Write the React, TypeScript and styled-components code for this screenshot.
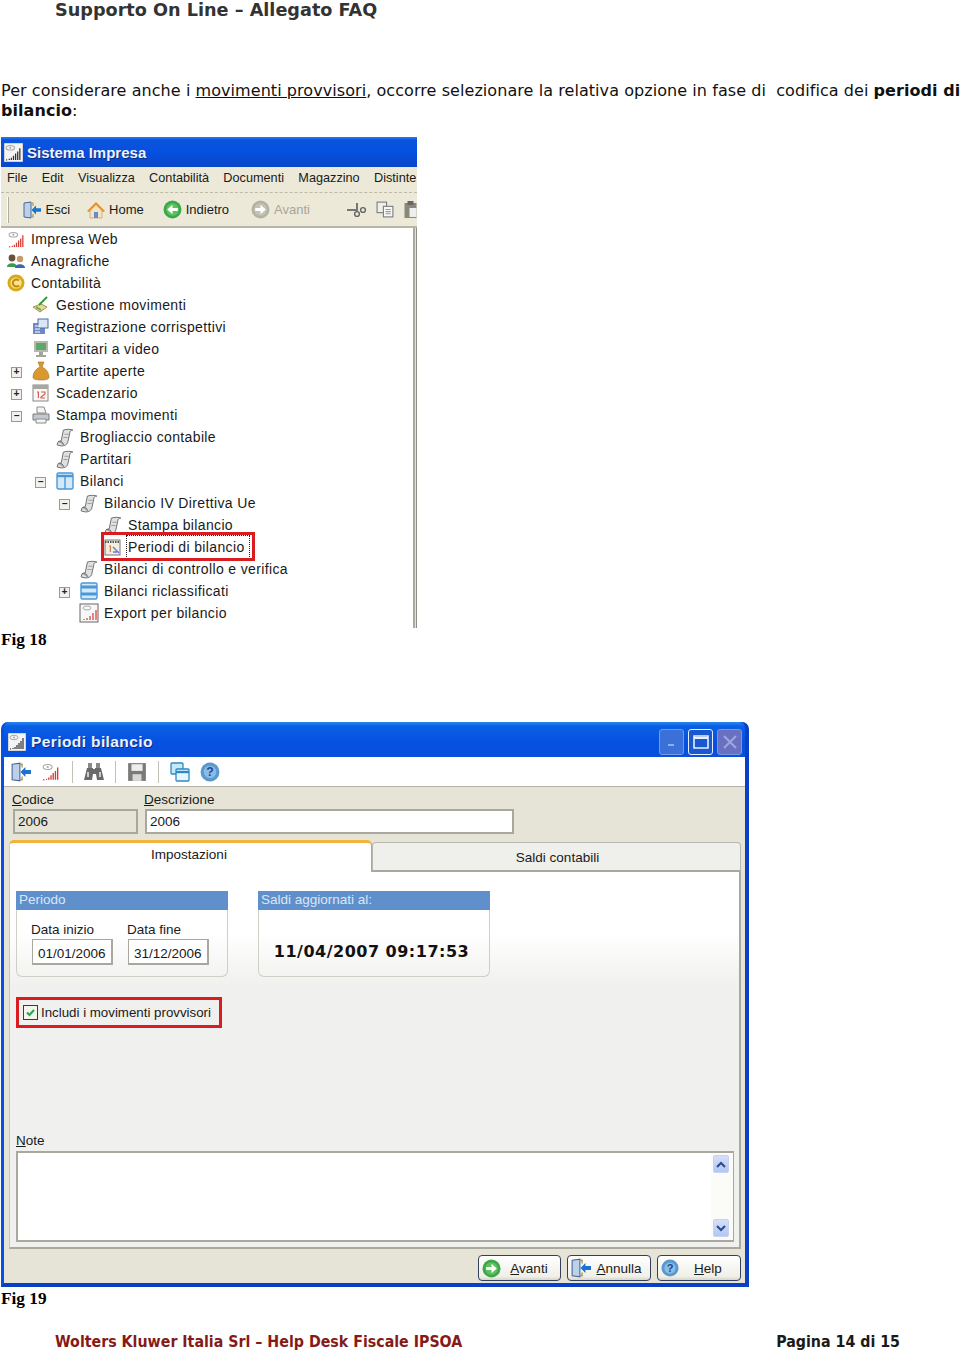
import { ReactNode } from 'react'
import styled, { createGlobalStyle } from 'styled-components'

const GlobalStyle = createGlobalStyle`
  html, body {
    margin: 0;
    padding: 0;
    background: #fff;
  }
`

const Page = styled.div`
  width: 960px;
  height: 1354px;
  overflow: hidden;
  display: flex;
  flex-direction: column;
  font-family: "DejaVu Sans", Verdana, sans-serif;
  color: #000;
`

const PageTitle = styled.div`
  font-size: 17.65px;
  line-height: 20px;
  font-weight: 700;
  color: #333;
  padding-left: 55px;
`

const Intro = styled.p`
  margin: 61px 0 0;
  padding-left: 1px;
  font-size: 16px;
  line-height: 20px;
  white-space: nowrap;
  letter-spacing: 0.065px;
  color: #111;
  u { text-decoration: underline; }
`

const Caption = styled.div`
  font-family: "Liberation Serif", serif;
  font-weight: 700;
  font-size: 17.3px;
  line-height: 20px;
  padding-left: 1px;
  margin-top: 2px;
`

const Shot = styled.div`
  font-family: "Liberation Sans", Arial, sans-serif;
  font-size: 14px;
  color: #1a1a1a;
`

/* ---- Fig 18 ---- */
const MainWindow = styled(Shot)`
  width: 416px;
  height: 491px;
  margin: 16px 0 0 1px;
  display: flex;
  flex-direction: column;
  overflow: hidden;
`

const TitleBar = styled.div<{ $h: number }>`
  height: ${p => p.$h}px;
  flex: none;
  display: flex;
  align-items: center;
  gap: 4px;
  padding-left: 3px;
  background: linear-gradient(#2a7cf0 0, #0a54dc 3px, #0550e0 50%, #0a46c8 100%);
  color: #eef3ff;
  font-family: "Liberation Sans", sans-serif;
  font-weight: 700;
  font-size: 15px;
  text-shadow: 1px 1px 0 #0a2a80;
`

const MenuBar = styled.div`
  height: 26px;
  flex: none;
  display: flex;
  align-items: center;
  gap: 14.3px;
  padding: 0 0 3px 6px;
  background: #ece9d8;
  border-bottom: 1px dashed #bdbaa8;
  box-sizing: border-box;
  white-space: nowrap;
  font-size: 12.7px;
`

const ToolBar = styled.div`
  height: 35px;
  flex: none;
  display: flex;
  align-items: center;
  padding-left: 6px;
  background: #ece9d8;
  border-bottom: 2px solid #b8b6a6;
  box-sizing: border-box;
  white-space: nowrap;
  font-size: 13px;
`

const Grip = styled.span`
  width: 1px;
  height: 26px;
  border-left: 1px solid #fff;
  border-right: 1px solid #b0ae9e;
  background: #d8d5c4;
  margin-right: 14px;
`

const ToolItem = styled.span<{ $off?: boolean; $gap?: number }>`
  display: inline-flex;
  align-items: center;
  gap: 4px;
  margin-right: ${p => p.$gap ?? 19}px;
  color: ${p => (p.$off ? '#a8a698' : 'inherit')};
`

const TreeArea = styled.div`
  flex: 1;
  display: flex;
  min-height: 0;
  background: #fff;
`

const Tree = styled.div`
  flex: 1;
`

const TreeScroll = styled.div`
  width: 4px;
  border-left: 2px solid #a9a99f;
  border-right: 1px solid #8e8e86;
  background: #e2e2da;
  box-sizing: border-box;
`

const Row = styled.div<{ $level: number }>`
  height: 22px;
  display: flex;
  align-items: center;
  padding-left: ${p => (p.$level === 0 ? 5 : 6 + p.$level * 24)}px;
  position: relative;
  white-space: nowrap;
  letter-spacing: 0.36px;
`

const Expander = styled.span`
  position: absolute;
  margin: 3px 0 0 -20px;
  width: 9px;
  height: 9px;
  border: 1px solid #9a9a90;
  background: #f2f2ec;
  display: flex;
  align-items: center;
  justify-content: center;
  font: 700 10px/9px "Liberation Mono", monospace;
  letter-spacing: 0;
  color: #222;
`

const IconSlot = styled.span`
  width: 20px;
  height: 20px;
  margin-right: 5px;
  flex: none;
  display: flex;
  align-items: center;
  justify-content: center;
`

const Selected = styled.span`
  position: relative;
  outline: 1px dotted #222;
  margin-left: -1px;
  padding: 0 4px 0 1px;
  line-height: 22px;
  &::after {
    content: '';
    position: absolute;
    left: -26px;
    right: -6px;
    top: -4px;
    bottom: -3px;
    border: 3px solid #d81c20;
  }
`

/* ---- Fig 19 ---- */
const Dialog = styled(Shot)`
  width: 748px;
  height: 565px;
  margin: 72px 0 0 1px;
  box-sizing: border-box;
  border-left: 3px solid #0a50e0;
  border-right: 4px solid #0a3fc8;
  border-bottom: 4px solid #0a3fc8;
  border-radius: 7px 7px 0 0;
  background: #0a50e0;
  display: flex;
  flex-direction: column;
  font-size: 13.5px;
`

const DialogBar = styled(TitleBar)`
  box-sizing: border-box;
  border-radius: 6px 6px 0 0;
  font-size: 15.5px;
  letter-spacing: 0.4px;
  justify-content: space-between;
  padding: 4px 3px 0 4px;
  background: linear-gradient(#2a88f0 0, #0a60e4 4px, #0550e0 60%, #0a50dc 100%);
`

const BarTitle = styled.span`
  display: flex;
  align-items: center;
  gap: 5px;
  margin-top: 1px;
`

const CaptionButtons = styled.span`
  display: flex;
  gap: 4px;
`

const CapBtn = styled.span<{ $bg: string; $active?: boolean }>`
  width: 25px;
  height: 26px;
  border-radius: 3px;
  border: 1px solid ${p => (p.$active ? '#e4f0ff' : '#6f9be8')};
  background: ${p => p.$bg};
  display: flex;
  align-items: center;
  justify-content: center;
  box-sizing: border-box;
`

const DialogTools = styled.div`
  height: 30px;
  flex: none;
  box-sizing: border-box;
  display: flex;
  align-items: center;
  padding-left: 7px;
  gap: 10px;
  background: #fff;
  border-bottom: 1px solid #b4b2a4;
`

const ToolSep = styled.span`
  width: 1px;
  height: 22px;
  background: #c4c2b4;
  margin: 0 1px;
`

const DialogBody = styled.div`
  flex: 1;
  background: #e5e4d6;
  display: flex;
  flex-direction: column;
  min-height: 0;
`

const FieldRow = styled.div`
  height: 53px;
  flex: none;
  display: flex;
  padding-left: 9px;
  gap: 7px;
`

const Field = styled.label<{ $w: number }>`
  width: ${p => p.$w}px;
  display: flex;
  flex-direction: column;
  line-height: 15px;
  padding-top: 5px;
  gap: 2px;
`

const FieldName = styled.span`
  margin-left: -1px;
`

const Input = styled.div<{ $disabled?: boolean }>`
  height: 25px;
  box-sizing: border-box;
  border: 2px solid #a9a89e;
  padding-left: 3px;
  line-height: 22px;
  background: ${p => (p.$disabled ? '#e5e4d6' : '#fff')};
`

const Tabs = styled.div`
  height: 32px;
  flex: none;
  display: flex;
  align-items: flex-end;
  padding: 0 4px 0 5px;
`

const ActiveTab = styled.div`
  width: 363px;
  height: 32px;
  box-sizing: border-box;
  border-top: 3px solid #f3b33d;
  border-left: 1px solid #cfcdbf;
  border-right: 1px solid #a9a89e;
  border-radius: 5px 5px 0 0;
  background: #fff;
  text-align: center;
  padding-right: 3px;
  line-height: 24px;
`

const Tab = styled.div`
  flex: 1;
  height: 30px;
  box-sizing: border-box;
  border: 1px solid #b8b7ac;
  border-bottom: 2px solid #a9a89e;
  border-radius: 4px 4px 0 0;
  background: #efefec;
  text-align: center;
  padding-left: 2px;
  line-height: 29px;
`

const TabPanel = styled.div`
  height: 377px;
  flex: none;
  margin: 0 4px 0 5px;
  box-sizing: border-box;
  background: linear-gradient(#fff 0, #fff 60px, #f0f0ee 115px);
  border-left: 1px solid #c8c6b8;
  border-right: 2px solid #a9a89e;
  border-bottom: 2px solid #a9a89e;
  padding: 19px 5px 0 6px;
  display: flex;
  flex-direction: column;
`

const Groups = styled.div`
  display: flex;
  gap: 30px;
`

const Group = styled.div<{ $w: number }>`
  width: ${p => p.$w}px;
  height: 86px;
  box-sizing: border-box;
  border: 1px solid #cfcfc8;
  border-top: 0;
  border-radius: 0 0 6px 6px;
`

const GroupHead = styled.div`
  height: 19px;
  margin: 0 -1px;
  background: #5f90cc;
  color: #dbe6f4;
  line-height: 18px;
  padding-left: 3px;
`

const DateFields = styled.div`
  display: flex;
  gap: 14px;
  padding: 10px 0 0 14px;
  line-height: 17px;
`

const DateField = styled.div`
  display: flex;
  flex-direction: column;
  margin-top: 1px;
`

const DateInput = styled(Input)`
  width: 81px;
  height: 26px;
  line-height: 27px;
  border-width: 1px 2px 2px 1px;
  padding-left: 5px;
  margin: 1px 0 0 1px;
`

const Stamp = styled.div`
  font-family: "DejaVu Sans", sans-serif;
  font-weight: 700;
  font-size: 16px;
  letter-spacing: 0.5px;
  text-align: center;
  padding-top: 32px;
  padding-right: 5px;
  color: #111;
`

const Highlight = styled.div`
  width: 206px;
  height: 31px;
  box-sizing: border-box;
  margin-top: 20px;
  border: 3px solid #d81c20;
  display: flex;
  align-items: center;
  padding-left: 4px;
  gap: 3px;
  white-space: nowrap;
  font-size: 13.3px;
`

const Check = styled.span`
  width: 13px;
  height: 13px;
  flex: none;
  border: 1px solid #1f3f66;
  background: #f4f4ee;
  display: flex;
  align-items: center;
  justify-content: center;
`

const NoteLabel = styled.div`
  margin-top: 105px;
  line-height: 15px;
`

const NoteBox = styled.div`
  height: 91px;
  margin-top: 3px;
  box-sizing: border-box;
  border: 2px solid #a9a89e;
  border-right-width: 1px;
  background: #fff;
  display: flex;
  justify-content: flex-end;
`

const NoteScroll = styled.div`
  width: 22px;
  padding: 2px 4px 3px 2px;
  box-sizing: border-box;
  background: #fbfbf8;
  display: flex;
  flex-direction: column;
  justify-content: space-between;
`

const ScrollBtn = styled.span`
  height: 18px;
  border-radius: 2px;
  background: linear-gradient(#d4dffa, #b4c6f2);
  border: 1px solid #c6d2f0;
  box-sizing: border-box;
  display: flex;
  align-items: center;
  justify-content: center;
`

const Footer = styled.div`
  flex: 1;
  display: flex;
  justify-content: flex-end;
  align-items: center;
  gap: 6px;
  padding: 4px 4px 0 0;
`

const PushBtn = styled.button<{ $w: number }>`
  width: ${p => p.$w}px;
  height: 26px;
  padding: 0 3px;
  display: flex;
  align-items: center;
  border: 1px solid #33405c;
  border-radius: 4px;
  background: linear-gradient(#fff, #f0efe8 85%, #d8d6c8);
  font: inherit;
  color: inherit;
  u { text-decoration: underline; }
`

const BtnLabel = styled.span`
  flex: 1;
  text-align: center;
`

const BottomLine = styled.div`
  margin-top: 24px;
  padding: 0 60px 0 55px;
  display: flex;
  justify-content: space-between;
  font-family: "DejaVu Sans Condensed", "DejaVu Sans", sans-serif;
  font-stretch: condensed;
  font-size: 15.8px;
  line-height: 18px;
  font-weight: 700;
`

const Company = styled.span`
  color: #861a16;
`

const PageNo = styled.span`
  color: #1a1a1a;
`

/* icons */
const AppIcon = ({ size = 18, framed = true }: { size?: number; framed?: boolean }) => (
  <svg width={size} height={size} viewBox="0 0 18 18">
    {framed && <rect x="0" y="0" width="18" height="18" fill="#f4f4f4" stroke="#8a8a8a" strokeWidth="0.6" />}
    <ellipse cx="6" cy="4.5" rx="4" ry="2.2" fill="none" stroke="#a8a8a8" />
    <circle cx="6" cy="4.5" r="1" fill="#a8a8a8" />
    <path d="M2 16h1M5 16v-1M7 16v-2M9 16v-4M11 16v-6M13 16v-8M15 16v-11" stroke={framed ? '#333' : '#d83a30'} strokeWidth="1.2" />
  </svg>
)

const ExitIcon = ({ size = 18 }: { size?: number }) => (
  <svg width={size} height={size} viewBox="0 0 18 18">
    <path d="M1 2l7-1v16l-7-1z" fill="#bcd0ea" stroke="#4a6898" />
    <path d="M8 2h2v3M8 16h2v-3" fill="none" stroke="#a89a60" strokeWidth="1.2" />
    <path d="M8.5 9l4.5-4.5v2.7h5v3.6h-5v2.7z" fill="#1a74d0" />
  </svg>
)

const HomeIcon = () => (
  <svg width="18" height="18" viewBox="0 0 18 18">
    <path d="M3 9v8h12V9L9 3z" fill="#f0e4c4" stroke="#b89858" strokeWidth="0.6" />
    <path d="M0 10L9 1l9 9-2 1-7-7-7 7z" fill="#e8902c" />
    <rect x="7" y="11" width="4" height="6" fill="#6a8ac8" />
  </svg>
)

const ArrowBall = ({ dir, off, size = 19 }: { dir: 'l' | 'r'; off?: boolean; size?: number }) => (
  <svg width={size} height={size} viewBox="0 0 18 18">
    <circle cx="9" cy="9" r="8.5" fill={off ? '#b4b2a4' : '#3aa84a'} />
    <circle cx="9" cy="9" r="6" fill={off ? '#c4c2b4' : '#5cc05c'} />
    <path d={dir === 'l' ? 'M4 9l5-4.5v3h5v3H9v3z' : 'M14 9L9 4.5v3H4v3h5v3z'} fill="#fff" />
  </svg>
)

const Scissors = () => (
  <svg width="20" height="16" viewBox="0 0 20 16">
    <path d="M0 8h9M10 1v8" stroke="#777" strokeWidth="2" fill="none" />
    <circle cx="10" cy="12" r="2.4" fill="none" stroke="#666" strokeWidth="1.4" />
    <circle cx="16" cy="8" r="2.4" fill="none" stroke="#666" strokeWidth="1.4" />
  </svg>
)

const CopyIcon = () => (
  <svg width="19" height="17" viewBox="0 0 18 16">
    <rect x="1" y="1" width="9" height="10" fill="#eee" stroke="#777" />
    <rect x="7" y="5" width="9" height="10" fill="#f8f8f8" stroke="#777" />
    <path d="M9 8h5M9 10h5M9 12h5" stroke="#999" />
  </svg>
)

const PasteIcon = () => (
  <svg width="13" height="18" viewBox="0 0 12 18">
    <rect x="0" y="2" width="12" height="15" fill="#8a8878" />
    <rect x="3" y="0" width="6" height="4" fill="#666" />
    <rect x="5" y="7" width="7" height="9" fill="#eee" />
  </svg>
)

const People = () => (
  <svg width="18" height="16" viewBox="0 0 18 16">
    <circle cx="5" cy="5" r="3.4" fill="#6a5038" />
    <path d="M0 14c0-5 10-5 10 0z" fill="#3a9a50" />
    <circle cx="13" cy="6" r="3.2" fill="#c89868" />
    <path d="M8 15c0-5 10-5 10 0z" fill="#3a68b8" />
  </svg>
)

const Coin = () => (
  <svg width="18" height="18" viewBox="0 0 18 18">
    <circle cx="9" cy="9" r="8.5" fill="#d8a818" />
    <circle cx="9" cy="9" r="5.6" fill="#f8e48c" />
    <path d="M12 6.5a3.6 3.6 0 1 0 0 5" fill="none" stroke="#c08a10" strokeWidth="2" />
  </svg>
)

const Broom = () => (
  <svg width="18" height="18" viewBox="0 0 18 18">
    <path d="M1 11l8-3 6 3-7 5z" fill="#e8d898" stroke="#a89050" />
    <path d="M7 9l8-8" stroke="#3a9a3a" strokeWidth="2" />
    <path d="M4 11l5 3" stroke="#6aa83a" strokeWidth="1.5" />
  </svg>
)

const Register = () => (
  <svg width="18" height="18" viewBox="0 0 18 18">
    <rect x="1" y="5" width="12" height="11" fill="#6a8ac8" />
    <rect x="6" y="1" width="10" height="9" fill="#dde6f4" stroke="#4a6aa8" />
    <path d="M3 8h5M3 11h5M3 14h5" stroke="#fff" />
  </svg>
)

const Monitor = () => (
  <svg width="18" height="18" viewBox="0 0 18 18">
    <rect x="2" y="1" width="14" height="11" fill="#b8b8b0" />
    <rect x="4" y="3" width="10" height="7" fill="#5ca868" />
    <path d="M7 12h4v3h3v2H4v-2h3z" fill="#a4a49c" />
  </svg>
)

const Sack = () => (
  <svg width="18" height="20" viewBox="0 0 18 20">
    <path d="M6 1h6l-2 5c5 2 7 7 7 10 0 2-2 3-8 3s-8-1-8-3c0-3 2-8 7-10z" fill="#d89a30" stroke="#a87018" strokeWidth="0.6" />
  </svg>
)

const Calendar = () => (
  <svg width="18" height="18" viewBox="0 0 18 18">
    <rect x="1" y="1" width="15" height="16" fill="#f8f8f4" stroke="#888" />
    <rect x="1" y="1" width="15" height="4" fill="#a8a8a0" />
    <path d="M5 8h1.4v6M9 8h4v2l-4 3v1h4" fill="none" stroke="#d85a50" strokeWidth="1.2" />
  </svg>
)

const Printer = () => (
  <svg width="18" height="18" viewBox="0 0 18 18">
    <path d="M5 1h7l2 6H5z" fill="#f4f4f4" stroke="#8a8a8a" />
    <path d="M1 8h16v6H1z" fill="#c4c8d0" stroke="#7a7a7a" />
    <path d="M4 13h10v4H4z" fill="#f4f4f4" stroke="#8a8a8a" />
  </svg>
)

const Scroll = () => (
  <svg width="19" height="19" viewBox="0 0 18 18">
    <path d="M7 2c3-1 7-1 9 0-2 0-3 1-3 3l-2 9c-1 2-3 3-6 3l-4-1 1-3 3-1z" fill="#dfe1e1" stroke="#6a6a6a" strokeWidth="0.9" />
    <path d="M2 13c2-1 5 0 5 3" fill="#a8a8a8" stroke="#6a6a6a" strokeWidth="0.9" />
    <path d="M8 6h4M7 9h4" stroke="#a0a0a0" />
  </svg>
)

const PanelCols = () => (
  <svg width="18" height="18" viewBox="0 0 18 18">
    <rect x="1" y="1" width="16" height="16" rx="1.5" fill="#d4e8f8" stroke="#4a98d8" strokeWidth="1.4" />
    <path d="M1 4h16" stroke="#4a98d8" strokeWidth="2.4" />
    <path d="M9 4v13" stroke="#4a98d8" strokeWidth="1.4" />
  </svg>
)

const PanelRows = () => (
  <svg width="18" height="18" viewBox="0 0 18 18">
    <rect x="1" y="1" width="16" height="16" rx="1.5" fill="#d4e8f8" stroke="#4a98d8" strokeWidth="1.4" />
    <path d="M1 5h16M1 12h16" stroke="#4a98d8" strokeWidth="3" />
  </svg>
)

const CalendarDoc = () => (
  <svg width="18" height="18" viewBox="0 0 18 18">
    <rect x="1" y="2" width="15" height="15" fill="#f4eee0" stroke="#777" />
    <path d="M1 4h15" stroke="#555" strokeWidth="2" strokeDasharray="1.5 1" />
    <path d="M5 8h1.4v6" fill="none" stroke="#d87a50" strokeWidth="1.2" />
    <path d="M9 9l6 6M9 14h4" stroke="#6a78c8" strokeWidth="1.4" />
  </svg>
)

const ExportDoc = () => (
  <svg width="20" height="20" viewBox="0 0 20 20">
    <rect x="1" y="1" width="18" height="18" fill="#f8f8f8" stroke="#666" />
    <ellipse cx="8" cy="5" rx="4" ry="2" fill="none" stroke="#aaa" />
    <path d="M5 17v-1M8 17v-2M11 17v-4M14 17v-7M17 17v-10" stroke="#d83a30" strokeWidth="1.2" />
  </svg>
)

const Binoculars = () => (
  <svg width="20" height="19" viewBox="0 0 20 19">
    <path d="M4 1h4v5H4zM12 1h4v5h-4z" fill="#8a8a88" />
    <path d="M3 6h6v1h2V6h6l3 12h-7l-1-6H9l-1 6H0z" fill="#6a6a68" />
    <path d="M4 10v5M16 10v5" stroke="#e4e4e2" strokeWidth="1.6" />
  </svg>
)

const Floppy = () => (
  <svg width="20" height="20" viewBox="0 0 18 18">
    <path d="M1 1h16v16H1z" fill="#7a7a78" />
    <rect x="4" y="2" width="10" height="6" fill="#eee" />
    <rect x="5" y="11" width="8" height="6" fill="#d8d8d4" />
  </svg>
)

const Windows = () => (
  <svg width="20" height="20" viewBox="0 0 20 20">
    <rect x="1" y="1" width="12" height="11" rx="1" fill="#c8e8f4" stroke="#2a8ac8" strokeWidth="1.3" />
    <rect x="6" y="7" width="13" height="12" rx="1" fill="#e8f6fb" stroke="#2a8ac8" strokeWidth="1.3" />
    <path d="M6 10h13" stroke="#2a8ac8" strokeWidth="2.4" />
  </svg>
)

const HelpBall = ({ size = 18 }: { size?: number }) => (
  <svg width={size} height={size} viewBox="0 0 18 18">
    <circle cx="9" cy="9" r="8.5" fill="#5a98d0" />
    <circle cx="9" cy="9" r="5.6" fill="#8cbce4" />
    <text x="9" y="13" textAnchor="middle" fontFamily="Liberation Sans" fontWeight="700" fontSize="11" fill="#1a4a90">?</text>
  </svg>
)

const Chevron = ({ up }: { up?: boolean }) => (
  <svg width="10" height="7" viewBox="0 0 10 7">
    <path d={up ? 'M1 6l4-4 4 4' : 'M1 1l4 4 4-4'} fill="none" stroke="#2a4a8a" strokeWidth="2" />
  </svg>
)

type TreeItem = {
  level: number
  icon: ReactNode
  label: string
  toggle?: '+' | '−'
  selected?: boolean
}

const treeItems: TreeItem[] = [
  { level: 0, icon: <AppIcon size={19} framed={false} />, label: 'Impresa Web' },
  { level: 0, icon: <People />, label: 'Anagrafiche' },
  { level: 0, icon: <Coin />, label: 'Contabilità' },
  { level: 1, icon: <Broom />, label: 'Gestione movimenti' },
  { level: 1, icon: <Register />, label: 'Registrazione corrispettivi' },
  { level: 1, icon: <Monitor />, label: 'Partitari a video' },
  { level: 1, icon: <Sack />, label: 'Partite aperte', toggle: '+' },
  { level: 1, icon: <Calendar />, label: 'Scadenzario', toggle: '+' },
  { level: 1, icon: <Printer />, label: 'Stampa movimenti', toggle: '−' },
  { level: 2, icon: <Scroll />, label: 'Brogliaccio contabile' },
  { level: 2, icon: <Scroll />, label: 'Partitari' },
  { level: 2, icon: <PanelCols />, label: 'Bilanci', toggle: '−' },
  { level: 3, icon: <Scroll />, label: 'Bilancio IV Direttiva Ue', toggle: '−' },
  { level: 4, icon: <Scroll />, label: 'Stampa bilancio' },
  { level: 4, icon: <CalendarDoc />, label: 'Periodi di bilancio', selected: true },
  { level: 3, icon: <Scroll />, label: 'Bilanci di controllo e verifica' },
  { level: 3, icon: <PanelRows />, label: 'Bilanci riclassificati', toggle: '+' },
  { level: 3, icon: <ExportDoc />, label: 'Export per bilancio' },
]

const menus = ['File', 'Edit', 'Visualizza', 'Contabilità', 'Documenti', 'Magazzino', 'Distinte']

const App = () => (
  <>
    <GlobalStyle />
    <Page>
      <PageTitle>Supporto On Line – Allegato FAQ</PageTitle>
      <Intro>
        Per considerare anche i <u>movimenti provvisori</u>, occorre selezionare la relativa opzione in fase di&nbsp; codifica dei <b>periodi di</b>
        <br />
        <b>bilancio</b>:
      </Intro>

      <MainWindow>
        <TitleBar $h={30}>
          <AppIcon size={19} />
          Sistema Impresa
        </TitleBar>
        <MenuBar>
          {menus.map(m => (
            <span key={m}>{m}</span>
          ))}
        </MenuBar>
        <ToolBar>
          <Grip />
          <ToolItem $gap={17}><ExitIcon />Esci</ToolItem>
          <ToolItem><HomeIcon />Home</ToolItem>
          <ToolItem $gap={22}><ArrowBall dir="l" />Indietro</ToolItem>
          <ToolItem $off $gap={37}><ArrowBall dir="r" off />Avanti</ToolItem>
          <ToolItem $gap={9}><Scissors /></ToolItem>
          <ToolItem $gap={9}><CopyIcon /></ToolItem>
          <ToolItem $gap={0}><PasteIcon /></ToolItem>
        </ToolBar>
        <TreeArea>
          <Tree>
            {treeItems.map(item => (
              <Row key={item.label} $level={item.level}>
                {item.toggle && <Expander>{item.toggle}</Expander>}
                <IconSlot>{item.icon}</IconSlot>
                {item.selected ? <Selected>{item.label}</Selected> : item.label}
              </Row>
            ))}
          </Tree>
          <TreeScroll />
        </TreeArea>
      </MainWindow>
      <Caption>Fig 18</Caption>

      <Dialog>
        <DialogBar $h={35}>
          <BarTitle><AppIcon />Periodi bilancio</BarTitle>
          <CaptionButtons>
            <CapBtn $bg="#3a70d8">
              <svg width="10" height="10" viewBox="0 0 10 10"><path d="M1 8h6" stroke="#8cb0f0" strokeWidth="2" /></svg>
            </CapBtn>
            <CapBtn $bg="#1a58d0" $active>
              <svg width="16" height="14" viewBox="0 0 16 14"><path d="M1 1h14v12H1z" fill="none" stroke="#e8f0ff" strokeWidth="1.6" /><path d="M1 3h14" stroke="#e8f0ff" strokeWidth="2" /></svg>
            </CapBtn>
            <CapBtn $bg="#6a70c0">
              <svg width="16" height="16" viewBox="0 0 16 16"><path d="M2 2l12 12M14 2L2 14" stroke="#9ea4dc" strokeWidth="2.2" /></svg>
            </CapBtn>
          </CaptionButtons>
        </DialogBar>
        <DialogTools>
          <ExitIcon size={20} />
          <AppIcon size={20} framed={false} />
          <ToolSep />
          <Binoculars />
          <ToolSep />
          <Floppy />
          <ToolSep />
          <Windows />
          <HelpBall size={20} />
        </DialogTools>
        <DialogBody>
          <FieldRow>
            <Field $w={125}>
              <FieldName><u>C</u>odice</FieldName>
              <Input $disabled>2006</Input>
            </Field>
            <Field $w={369}>
              <FieldName><u>D</u>escrizione</FieldName>
              <Input>2006</Input>
            </Field>
          </FieldRow>
          <Tabs>
            <ActiveTab>Impostazioni</ActiveTab>
            <Tab>Saldi contabili</Tab>
          </Tabs>
          <TabPanel>
            <Groups>
              <Group $w={212}>
                <GroupHead>Periodo</GroupHead>
                <DateFields>
                  <DateField>Data inizio<DateInput>01/01/2006</DateInput></DateField>
                  <DateField>Data fine<DateInput>31/12/2006</DateInput></DateField>
                </DateFields>
              </Group>
              <Group $w={232}>
                <GroupHead>Saldi aggiornati al:</GroupHead>
                <Stamp>11/04/2007 09:17:53</Stamp>
              </Group>
            </Groups>
            <Highlight>
              <Check>
                <svg width="11" height="11" viewBox="0 0 11 11"><path d="M2 5.5l2.5 2.5L9 3" fill="none" stroke="#2aa84a" strokeWidth="2.2" /></svg>
              </Check>
              Includi i movimenti provvisori
            </Highlight>
            <NoteLabel><u>N</u>ote</NoteLabel>
            <NoteBox>
              <NoteScroll>
                <ScrollBtn><Chevron up /></ScrollBtn>
                <ScrollBtn><Chevron /></ScrollBtn>
              </NoteScroll>
            </NoteBox>
          </TabPanel>
          <Footer>
            <PushBtn $w={83}><ArrowBall dir="r" /><BtnLabel><u>A</u>vanti</BtnLabel></PushBtn>
            <PushBtn $w={84}><ExitIcon size={20} /><BtnLabel><u>A</u>nnulla</BtnLabel></PushBtn>
            <PushBtn $w={84}><HelpBall /><BtnLabel><u>H</u>elp</BtnLabel></PushBtn>
          </Footer>
        </DialogBody>
      </Dialog>
      <Caption>Fig 19</Caption>

      <BottomLine>
        <Company>Wolters Kluwer Italia Srl – Help Desk Fiscale IPSOA</Company>
        <PageNo>Pagina 14 di 15</PageNo>
      </BottomLine>
    </Page>
  </>
)

export default App
